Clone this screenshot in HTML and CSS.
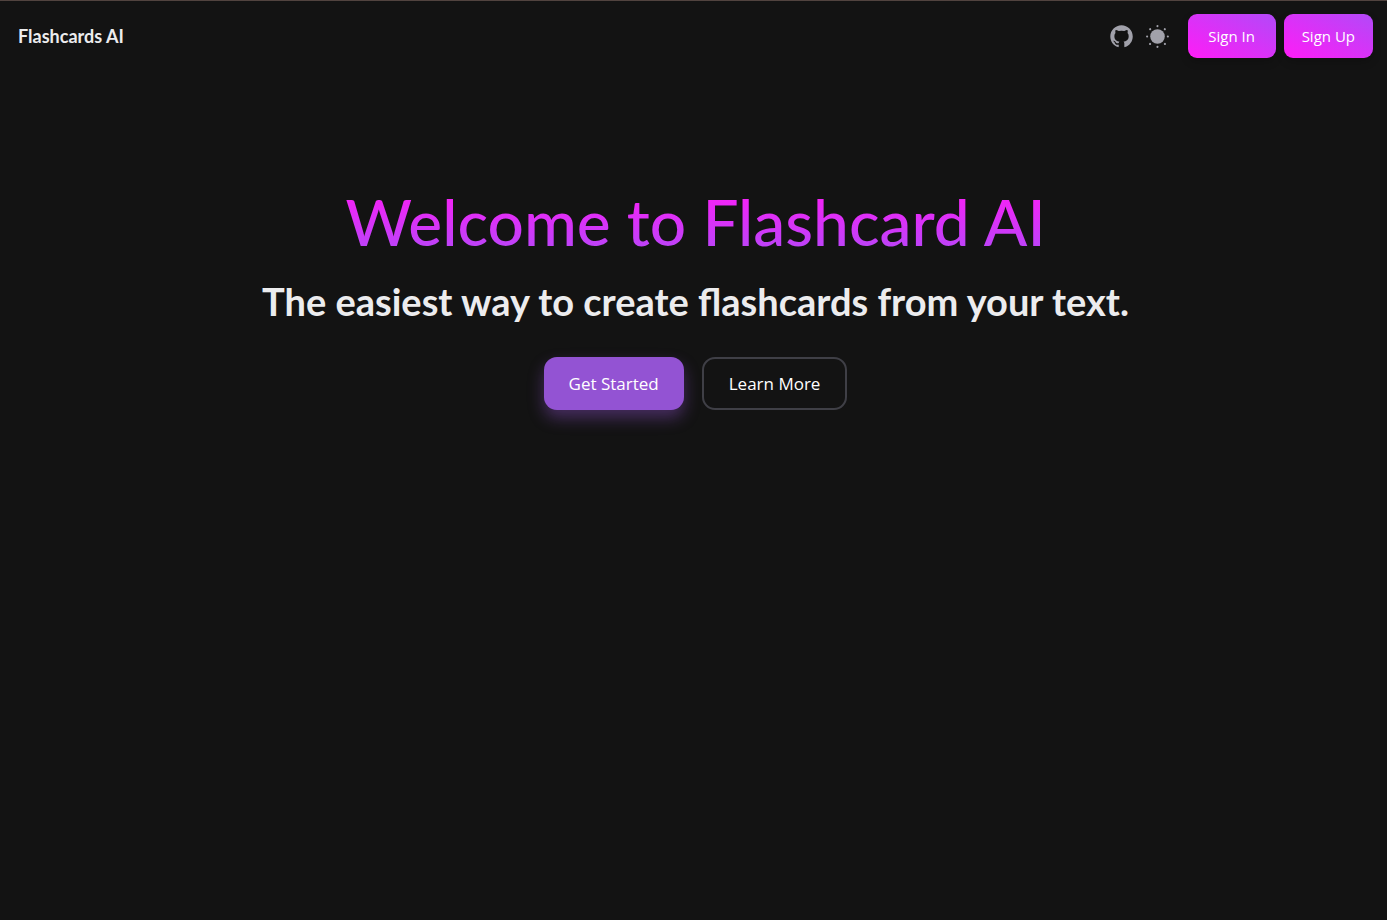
FILE: index.html
```html
<!DOCTYPE html>
<html lang="en">
<head>
<meta charset="utf-8">
<meta name="viewport" content="width=device-width, initial-scale=1">
<title>Flashcards AI</title>
<link rel="stylesheet" href="styles.css">
</head>
<body class="page">
<header class="navbar">
  <a class="brand" href="#">Flashcards AI</a>
  <div class="tools">
    <a class="icon-link" href="#" aria-label="GitHub">
      <svg width="27" height="27" viewBox="0 0 24 24" fill="currentColor" aria-hidden="true"><path fill-rule="evenodd" clip-rule="evenodd" d="M12.026 2c-5.509 0-9.974 4.465-9.974 9.974 0 4.406 2.857 8.145 6.821 9.465.499.09.679-.217.679-.481 0-.237-.008-.865-.011-1.696-2.775.602-3.361-1.338-3.361-1.338-.452-1.152-1.107-1.459-1.107-1.459-.905-.619.069-.605.069-.605 1.002.07 1.527 1.028 1.527 1.028.89 1.524 2.336 1.084 2.902.829.091-.645.351-1.085.635-1.334-2.214-.251-4.542-1.107-4.542-4.93 0-1.087.389-1.979 1.024-2.675-.101-.253-.446-1.268.099-2.64 0 0 .837-.269 2.742 1.021a9.582 9.582 0 0 1 2.496-.336 9.554 9.554 0 0 1 2.496.336c1.906-1.291 2.742-1.021 2.742-1.021.545 1.372.203 2.387.099 2.64.64.696 1.024 1.587 1.024 2.675 0 3.833-2.33 4.675-4.552 4.922.355.308.675.916.675 1.846 0 1.334-.012 2.41-.012 2.737 0 .267.178.577.687.479C19.146 20.115 22 16.379 22 11.974 22 6.465 17.535 2 12.026 2z"/></svg>
    </a>
    <button class="icon-button" type="button" aria-label="Switch to light mode">
      <svg width="25" height="25" viewBox="0 0 24 24" fill="currentColor" aria-hidden="true"><path d="M19 12a7 7 0 11-7-7 7 7 0 017 7z"/><path d="M12 22.96a.969.969 0 01-1-.96v-.08a1 1 0 012 0 1.038 1.038 0 01-1 1.04zm7.14-2.82a1.024 1.024 0 01-.71-.29l-.13-.13a1 1 0 011.41-1.41l.13.13a1 1 0 010 1.41.984.984 0 01-.7.29zm-14.28 0a1.024 1.024 0 01-.71-.29 1 1 0 010-1.41l.13-.13a1 1 0 011.41 1.41l-.13.13a1 1 0 01-.7.29zM22 13h-.08a1 1 0 010-2 1.038 1.038 0 011.04 1 .969.969 0 01-.96 1zM2.08 13H2a1 1 0 010-2 1.038 1.038 0 011.04 1 .969.969 0 01-.96 1zm16.93-7.01a1.024 1.024 0 01-.71-.29 1 1 0 010-1.41l.13-.13a1 1 0 011.41 1.41l-.13.13a.984.984 0 01-.7.29zm-14.02 0a1.024 1.024 0 01-.71-.29l-.13-.14a1 1 0 011.41-1.41l.13.13a1 1 0 010 1.41.97.97 0 01-.7.3zM12 3.04a.969.969 0 01-1-.96V2a1 1 0 012 0 1.038 1.038 0 01-1 1.04z"/></svg>
    </button>
    <div class="auth">
      <button class="auth-button" type="button">Sign In</button>
      <button class="auth-button" type="button">Sign Up</button>
    </div>
  </div>
</header>
<main class="hero">
  <h1 class="title">Welcome to Flashcard AI</h1>
  <p class="subtitle">The easiest way to create flashcards from your text.</p>
  <div class="actions">
    <button class="cta cta-primary" type="button">Get Started</button>
    <button class="cta cta-outline" type="button">Learn More</button>
  </div>
</main>
</body>
</html>
```
FILE: styles.css
```css
* {
  box-sizing: border-box;
}

.page {
  margin: 0;
  min-height: 100vh;
  border-top: 1px solid #51433f;
  background: #131313;
  color: #ececee;
  font-family: "Segoe UI", "Open Sans", "Noto Sans", sans-serif;
}

.navbar {
  display: flex;
  align-items: center;
  justify-content: space-between;
  height: 70px;
  padding: 0 14px 0 18px;
}

.brand {
  color: inherit;
  font-family: "Segoe UI", Lato, "Open Sans", sans-serif;
  font-size: 18px;
  font-weight: 700;
  line-height: 24px;
  text-decoration: none;
}

.tools {
  display: flex;
  align-items: center;
}

.icon-link,
.icon-button {
  display: flex;
  padding: 0;
  border: 0;
  background: none;
  color: #a1a1aa;
}

.icon-button {
  margin: 0 18px 0 10px;
}

.auth {
  display: flex;
  gap: 8px;
}

.auth-button {
  min-width: 88px;
  height: 44px;
  padding: 0 18px;
  border: 0;
  border-radius: 9px;
  background: linear-gradient(to top right, #ff1cf7, #b249f8);
  box-shadow: 0 4px 8px rgba(0, 0, 0, 0.2);
  color: #ffffff;
  font: inherit;
  font-size: 15px;
}

.hero {
  display: flex;
  flex-direction: column;
  align-items: center;
  padding: 115px 20px 24px 24px;
  text-align: center;
}

.title {
  margin: 0;
  background: linear-gradient(to bottom, #ff1cf7, #b249f8);
  background-clip: text;
  -webkit-background-clip: text;
  color: transparent;
  font-family: "Segoe UI", Lato, "Open Sans", sans-serif;
  font-size: 64px;
  font-weight: 500;
  line-height: 72px;
}

.subtitle {
  margin: 19px 0 0;
  font-family: "Segoe UI", Lato, "Open Sans", sans-serif;
  font-size: 38px;
  font-weight: 700;
  line-height: 48px;
}

.actions {
  display: flex;
  gap: 18px;
  margin-top: 32px;
}

.cta {
  height: 53px;
  padding: 0 25px;
  border: 0;
  border-radius: 13px;
  background: transparent;
  color: #ffffff;
  font: inherit;
  font-size: 17px;
}

.cta-primary {
  background: #9353d3;
  box-shadow: 0 8px 16px rgba(147, 83, 211, 0.4);
}

.cta-outline {
  border: 2px solid #3f3f46;
}
```
